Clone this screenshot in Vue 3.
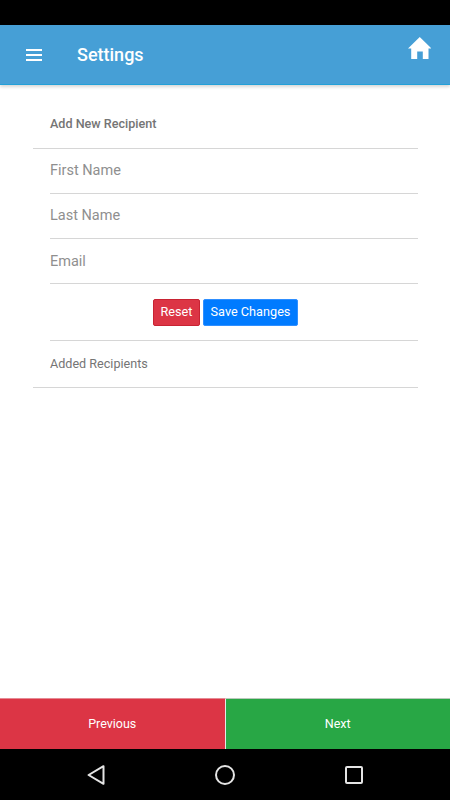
<script setup>
const fields = ['First Name', 'Last Name', 'Email']
</script>

<template>
  <div class="page">
    <div class="status-bar"></div>
    <header class="toolbar">
      <button class="menu-btn" aria-label="Menu">
        <span></span><span></span><span></span>
      </button>
      <div class="title">Settings</div>
      <svg class="home" viewBox="0 0 23.5 22" width="23.5" height="22">
        <path d="M11.75 0 23.5 11.5h-3V22h-5.7v-7.5H9.2V22h-6V11.5H0z" fill="#fff" />
      </svg>
    </header>

    <main class="content">
      <div class="heading">Add New Recipient</div>
      <div v-for="field in fields" :key="field" class="field">
        <input type="text" :placeholder="field">
      </div>
      <div class="actions">
        <button class="btn reset">Reset</button>
        <button class="btn save">Save Changes</button>
      </div>
      <div class="added">Added Recipients</div>
    </main>

    <footer class="footer">
      <button class="nav prev">Previous</button>
      <button class="nav next">Next</button>
    </footer>

    <div class="android-bar">
      <svg viewBox="0 0 18 20" width="18" height="20">
        <path d="M16.5 1.2 1.6 10l14.9 8.8z" fill="none" stroke="#e4e4e4" stroke-width="2" stroke-linejoin="round" />
      </svg>
      <svg viewBox="0 0 22 22" width="22" height="22">
        <circle cx="11" cy="11" r="9" fill="none" stroke="#e4e4e4" stroke-width="2" />
      </svg>
      <svg viewBox="0 0 18 18" width="18" height="18">
        <rect x="1" y="1" width="16" height="16" rx="1" fill="none" stroke="#e4e4e4" stroke-width="2" />
      </svg>
    </div>
  </div>
</template>

<style>
html, body {
  margin: 0;
  background: #fff;
}
</style>

<style scoped>
.page {
  display: flex;
  flex-direction: column;
  width: 450px;
  height: 800px;
  overflow: hidden;
  font-family: Roboto, "Liberation Sans", sans-serif;
}

.status-bar {
  height: 25px;
  background: #000;
  flex: none;
}

.toolbar {
  display: flex;
  align-items: flex-start;
  height: 59px;
  flex: none;
  background: #469fd6;
  border-bottom: 1px solid #22a0d8;
  box-shadow: 0 2px 3px rgba(0, 0, 0, .16);
  color: #fff;
  position: relative;
}

.menu-btn {
  display: flex;
  flex-direction: column;
  gap: 3px;
  width: 16px;
  margin: 24px 0 0 26px;
  padding: 0;
  border: none;
  background: none;
}

.menu-btn span {
  display: block;
  height: 2px;
  background: #fff;
}

.title {
  margin: 19px 0 0 35px;
  font-size: 18px;
  font-weight: 500;
  line-height: 22px;
  flex: 1;
}

.home {
  margin: 12px 19px 0 0;
}

.content {
  flex: 1;
  padding: 0 32px 0 33px;
}

.heading {
  height: 63px;
  padding-left: 17px;
  line-height: 78px;
  font-size: 12.6px;
  font-weight: 500;
  color: #757575;
  border-bottom: 1px solid #d6d6d6;
}

.field {
  margin-left: 17px;
  height: 44px;
  border-bottom: 1px solid #d6d6d6;
}

.field input {
  display: block;
  width: 100%;
  height: 44px;
  box-sizing: border-box;
  padding: 0 0 1px;
  border: none;
  outline: none;
  background: none;
  font-family: inherit;
  font-size: 14.5px;
}

.field:nth-child(4) input {
  padding: 0;
}

.field input::placeholder {
  color: #8f8f8f;
  opacity: 1;
}

.actions {
  display: flex;
  justify-content: center;
  gap: 3px;
  margin-left: 17px;
  padding: 15px 17px 14px 0;
  height: 27px;
  border-bottom: 1px solid #d6d6d6;
}

.btn {
  height: 27px;
  padding: 0 0 2px;
  border-radius: 2px;
  color: #fff;
  font-family: inherit;
  font-size: 12.7px;
}

.reset {
  width: 47px;
  background: #dc3545;
  border: 1px solid #c82333;
}

.save {
  width: 95px;
  background: #007bff;
  border: 1px solid #2f8fff;
}

.added {
  height: 46px;
  padding-left: 17px;
  line-height: 46px;
  font-size: 12.6px;
  color: #757575;
  border-bottom: 1px solid #d6d6d6;
}

.footer {
  display: flex;
  flex: none;
  height: 51px;
}

.nav {
  flex: 1;
  padding: 0 0 2px;
  border: none;
  color: #fff;
  font-family: inherit;
  font-size: 12.5px;
}

.prev {
  background: #dc3545;
  border-top: 1px solid #e58a94;
  border-right: 1px solid #e8e8e8;
}

.next {
  background: #28a745;
  border-top: 1px solid #b9c9bb;
}

.android-bar {
  display: grid;
  grid-template-columns: repeat(3, 129px);
  justify-content: center;
  justify-items: center;
  align-items: center;
  flex: none;
  height: 51px;
  background: #000;
}
</style>
